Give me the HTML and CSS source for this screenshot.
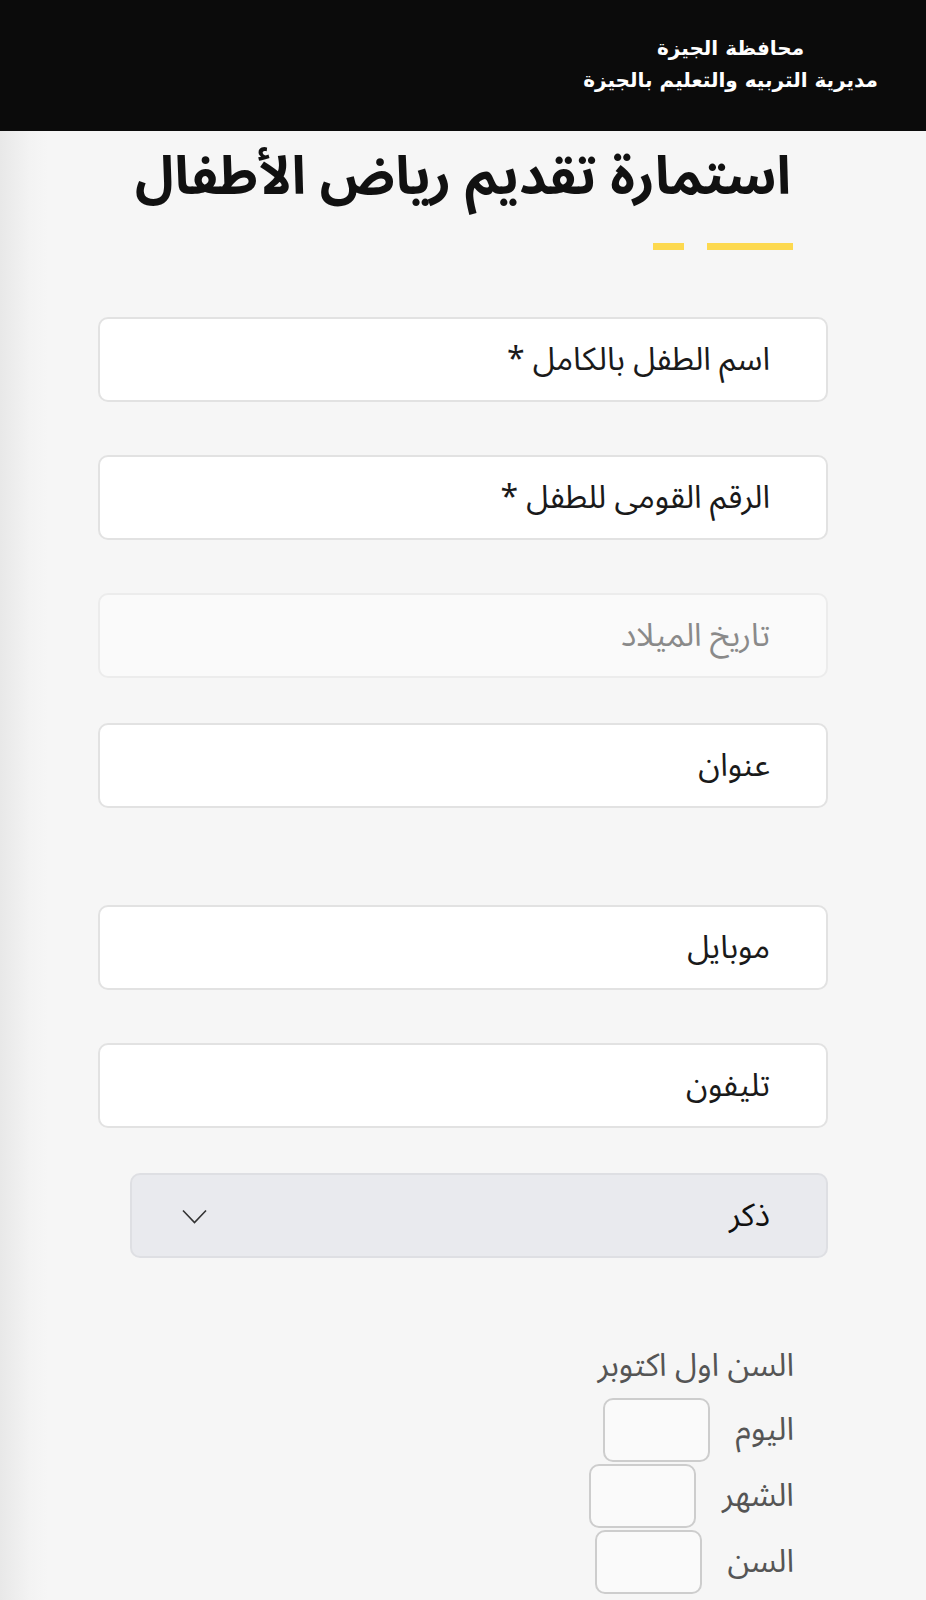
FILE: index.html
```html
<!DOCTYPE html>
<html lang="ar" dir="rtl">
<head>
<meta charset="utf-8">
<title>استمارة تقديم رياض الأطفال</title>
<link rel="stylesheet" href="styles.css">
</head>
<body>
<header class="topbar">
  <div class="brand">
    <div class="brand-line1">محافظة الجيزة</div>
    <div class="brand-line2">مديرية التربيه والتعليم بالجيزة</div>
  </div>
</header>
<main class="page">
  <h1 class="title">استمارة تقديم رياض الأطفال</h1>
  <div class="bars"><span class="bar bar-long"></span><span class="bar bar-short"></span></div>
  <form class="form">
    <input class="field" type="text" placeholder="اسم الطفل بالكامل *">
    <input class="field" type="text" placeholder="الرقم القومى للطفل *">
    <input class="field field-disabled" type="text" placeholder="تاريخ الميلاد">
    <input class="field field-address" type="text" placeholder="عنوان">
    <input class="field" type="text" placeholder="موبايل">
    <input class="field field-phone" type="text" placeholder="تليفون">
    <div class="select-wrap">
      <select class="select"><option>ذكر</option><option>انثى</option></select>
      <svg class="chevron" width="25" height="16" viewBox="0 0 25 16"><path d="M1 1.5 L12.5 13.5 L24 1.5" fill="none" stroke="#333" stroke-width="1.6"/></svg>
    </div>
    <div class="age">
      <div class="age-title">السن اول اكتوبر</div>
      <div class="age-row"><span class="age-label">اليوم</span><input class="age-box" type="text"></div>
      <div class="age-row"><span class="age-label">الشهر</span><input class="age-box" type="text"></div>
      <div class="age-row"><span class="age-label">السن</span><input class="age-box" type="text"></div>
    </div>
  </form>
</main>
</body>
</html>
```
FILE: styles.css
```css
* { box-sizing: border-box; }
html, body { margin: 0; padding: 0; }
body {
  font-family: "Noto Sans Arabic", "DejaVu Sans", "Noto Sans", sans-serif;
  background: linear-gradient(to right, #e8e8e8 0px, #f3f3f3 30px, #f6f6f6 48px, #f6f6f6 100%);
  min-height: 1600px;
  color: #111;
}
.topbar {
  height: 131px;
  background: #0b0b0b;
  display: flex;
  justify-content: flex-start;
  align-items: center;
  padding-right: 48px;
}
.brand {
  color: #fff;
  text-align: center;
  font-family: "DejaVu Sans", sans-serif;
  font-weight: 700;
  font-size: 20px;
  margin-top: -4px;
  display: flex;
  flex-direction: column;
  gap: 4px;
}
.brand-line1, .brand-line2 { line-height: 28px; height: 28px; }
.page {
  width: 730px;
  margin: 0 auto;
  padding-top: 10px;
}
.title {
  margin: 0;
  text-align: center;
  font-size: 53px;
  line-height: 72px;
  font-weight: 700;
  color: #111;
}
.bars {
  display: flex;
  gap: 23px;
  padding-right: 35px;
  margin-top: 30px;
  height: 7px;
}
.bar { display: block; height: 7px; background: #fdd94f; }
.bar-long { width: 86px; }
.bar-short { width: 31px; }
.form {
  display: flex;
  flex-direction: column;
  margin-top: 67px;
}
.field {
  display: block;
  width: 100%;
  height: 85px;
  border: 2px solid #e2e2e2;
  border-radius: 10px;
  background: #fff;
  padding: 0 56px 0 20px;
  font-family: inherit;
  font-size: 32px;
  color: #111;
  margin-bottom: 53px;
  direction: rtl;
}
.field::placeholder { color: #1a1a1a; opacity: 1; }
.field-disabled { background: #fafafa; border-color: #ececec; margin-bottom: 45px; }
.field-disabled::placeholder { color: #8a8a8a; }
.field-address { margin-bottom: 97px; }
.field-phone { margin-bottom: 45px; }
.select-wrap {
  position: relative;
  padding-left: 32px;
}
.select {
  display: block;
  width: 100%;
  height: 85px;
  border: 2px solid #dedfe3;
  border-radius: 10px;
  background: #e9eaee;
  padding: 0 56px 0 20px;
  font-family: inherit;
  font-size: 32px;
  color: #111;
  appearance: none;
  -webkit-appearance: none;
}
.chevron {
  position: absolute;
  left: 84px;
  top: 36px;
  pointer-events: none;
}
.age {
  margin-top: 86px;
  padding-right: 34px;
  display: flex;
  flex-direction: column;
  align-items: flex-start;
}
.age-title {
  font-size: 32px;
  line-height: 44px;
  color: #555;
  margin-bottom: 10px;
}
.age-row {
  display: flex;
  align-items: center;
  gap: 26px;
  margin-bottom: 2px;
}
.age-label {
  font-size: 32px;
  line-height: 44px;
  color: #555;
}
.age-box {
  width: 107px;
  height: 64px;
  border: 2px solid #cdcdcd;
  border-radius: 10px;
  background: #fafafa;
}
```
